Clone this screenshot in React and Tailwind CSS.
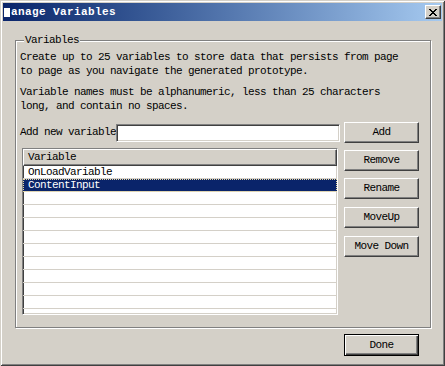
import React from 'react';

const raised =
  'border border-t-white border-l-white border-r-[#404040] border-b-[#404040] shadow-[inset_-1px_-1px_0_#808080]';
const sunken =
  'border border-t-[#808080] border-l-[#808080] border-r-white border-b-white shadow-[inset_1px_1px_0_#404040,inset_-1px_-1px_0_#d4d0c8]';

function Btn({ children, className = '' }) {
  return (
    <button className={`w-[75px] h-[21px] bg-[#d4d0c8] ${raised} flex items-center justify-center leading-none whitespace-nowrap ${className}`}>
      {children}
    </button>
  );
}

const rows = ['OnLoadVariable', 'ContentInput', '', '', '', '', '', '', '', '', '', ''];

export default function App() {
  return (
    <div className="w-[445px] h-[366px] bg-[#d4d0c8] p-[3px] flex flex-col text-black text-[11px] tracking-[-0.6px] font-['Liberation_Mono',monospace] shadow-[inset_1px_1px_0_#d4d0c8,inset_-1px_-1px_0_#404040,inset_2px_2px_0_#fff,inset_-2px_-2px_0_#808080]">
      {/* title bar */}
      <div className="h-[18px] flex items-center pl-[1px] pr-[1px] bg-linear-to-r from-[#0a246a] to-[#a6caf0]">
        <span className="w-[6px] h-[9px] bg-white mt-[1px]" />
        <span className="ml-[1px] font-bold text-white tracking-[0.4px] leading-none">anage Variables</span>
        <button className={`ml-auto w-[16px] h-[14px] bg-[#d4d0c8] ${raised} flex items-center justify-center`}>
          <svg width="8" height="7" viewBox="0 0 8 7" shapeRendering="crispEdges">
            <path
              fill="#000"
              d="M0 0h2v1h-2zM6 0h2v1h-2zM1 1h2v1h-2zM5 1h2v1h-2zM2 2h4v1h-4zM3 3h2v1h-2zM2 4h4v1h-4zM1 5h2v1h-2zM5 5h2v1h-2zM0 6h2v1h-2zM6 6h2v1h-2z"
            />
          </svg>
        </button>
      </div>

      {/* group box */}
      <div className="relative mt-[19px] ml-[12px] w-[416px] h-[288px] border border-[#808080] shadow-[inset_1px_1px_0_#fff,1px_1px_0_#fff] pt-[9px] pl-[4px]">
        <span className="absolute left-[8px] top-[-8px] bg-[#d4d0c8] px-[1px] leading-[14px]">Variables</span>
        <p className="leading-[14px] whitespace-nowrap">
          Create up to 25 variables to store data that persists from page
          <br />
          to page as you navigate the generated prototype.
        </p>
        <p className="leading-[14px] mt-[7px] whitespace-nowrap">
          Variable names must be alphanumeric, less than 25 characters
          <br />
          long, and contain no spaces.
        </p>

        <div className="flex mt-[9px]">
          <div className="w-[318px] flex flex-col">
            <div className="h-[20px] flex items-center">
              <span className="whitespace-nowrap">Add new variable</span>
              <div className={`ml-auto self-end shrink-0 w-[224px] h-[18px] bg-white ${sunken}`} />
            </div>
            <div className={`mt-[6px] ml-[2px] w-[316px] h-[167px] bg-white overflow-hidden flex flex-col ${sunken}`}>
              <div className="h-[17px] shrink-0 bg-[#d4d0c8] border border-t-white border-l-white border-r-[#404040] border-b-[#404040] shadow-[inset_-1px_-1px_0_#808080] pl-[4px] leading-[14px]">
                Variable
              </div>
              {rows.map((r, i) => (
                <div
                  key={i}
                  className={`h-[13px] shrink-0 leading-[12px] pl-[5px] border-b border-[#d4d0c8] ${
                    i === 1
                      ? 'bg-[#0a246a] text-white outline outline-1 outline-dotted outline-[#e8d8a0] -outline-offset-1'
                      : ''
                  }`}
                >
                  {r}
                </div>
              ))}
            </div>
          </div>

          <div className="ml-[6px] flex flex-col">
            <Btn>Add</Btn>
            <Btn className="mt-[7px]">Remove</Btn>
            <Btn className="mt-[7px]">Rename</Btn>
            <Btn className="mt-[8px]">MoveUp</Btn>
            <Btn className="mt-[8px]">Move Down</Btn>
          </div>
        </div>
      </div>

      <div className="mt-[6px] ml-[12px] w-[416px] flex justify-end pr-[12px]">
        <button className="w-[75px] h-[22px] bg-[#d4d0c8] border border-black shadow-[inset_1px_1px_0_#fff,inset_-1px_-1px_0_#404040,inset_-2px_-2px_0_#808080] flex items-center justify-center leading-none">
          Done
        </button>
      </div>
    </div>
  );
}
